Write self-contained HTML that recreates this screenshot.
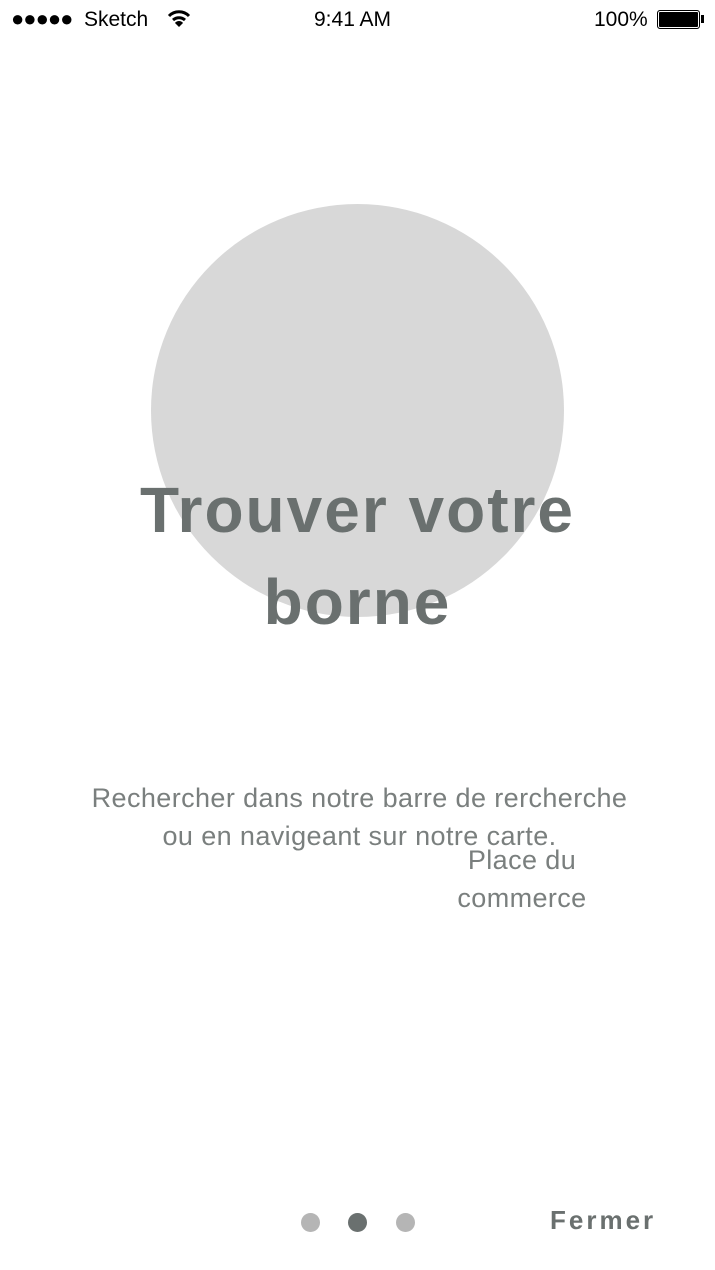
<!DOCTYPE html>
<html><head><meta charset="utf-8"><style>
html,body{margin:0;padding:0;background:#fff;}
body{width:715px;height:1270px;position:relative;overflow:hidden;font-family:"Liberation Sans",sans-serif;}
.abs{position:absolute;}
.sb{top:8px;font-size:21px;color:#000;}
.circle{left:151px;top:204px;width:413px;height:413px;border-radius:50%;background:#d8d8d8;}
.title{left:0;width:715px;top:464px;text-align:center;font-size:64px;font-weight:bold;color:#6a706f;line-height:92px;letter-spacing:2px;}
.desc{left:0;width:719px;top:779px;text-align:center;font-size:27px;letter-spacing:0.4px;color:#7a7f7e;line-height:38px;}
.place{left:422px;width:200px;top:841px;text-align:center;font-size:27px;letter-spacing:0.4px;color:#7a7f7e;line-height:38px;}
.dot{width:19px;height:19px;border-radius:50%;top:1213px;background:#b5b5b5;}
</style></head><body>
<div class="abs sb" style="left:11px;letter-spacing:-1px;font-size:22px;top:6px;">●●●●●</div>
<div class="abs sb" style="left:84px;">Sketch</div>
<svg class="abs" style="left:167px;top:9px" width="24" height="20" viewBox="0 0 24 20"><path d="M2 7 A14 14 0 0 1 22 7" stroke="#000" stroke-width="3" fill="none"/><path d="M6 11 A9 9 0 0 1 18 11" stroke="#000" stroke-width="3" fill="none"/><path d="M12 18 L8 14 A5 5 0 0 1 16 14 Z" fill="#000"/></svg>
<div class="abs sb" style="left:314px;">9:41 AM</div>
<div class="abs sb" style="left:594px;">100%</div>
<div class="abs" style="left:657px;top:10px;width:41px;height:17px;border:1px solid #000;border-radius:3px;background:#000;box-shadow:inset 0 0 0 1px #fff;"></div>
<div class="abs" style="left:701px;top:15px;width:3px;height:8px;background:#000;"></div>
<div class="abs circle"></div>
<div class="abs title">Trouver votre<br>borne</div>
<div class="abs desc">Rechercher dans notre barre de rercherche<br>ou en navigeant sur notre carte.</div>
<div class="abs place">Place du<br>commerce</div>
<div class="abs dot" style="left:301px"></div>
<div class="abs dot" style="left:348px;background:#6a706f"></div>
<div class="abs dot" style="left:396px"></div>
<div class="abs" style="left:550px;top:1205px;font-size:26px;font-weight:bold;color:#6a706f;letter-spacing:3px;">Fermer</div>
</body></html>
